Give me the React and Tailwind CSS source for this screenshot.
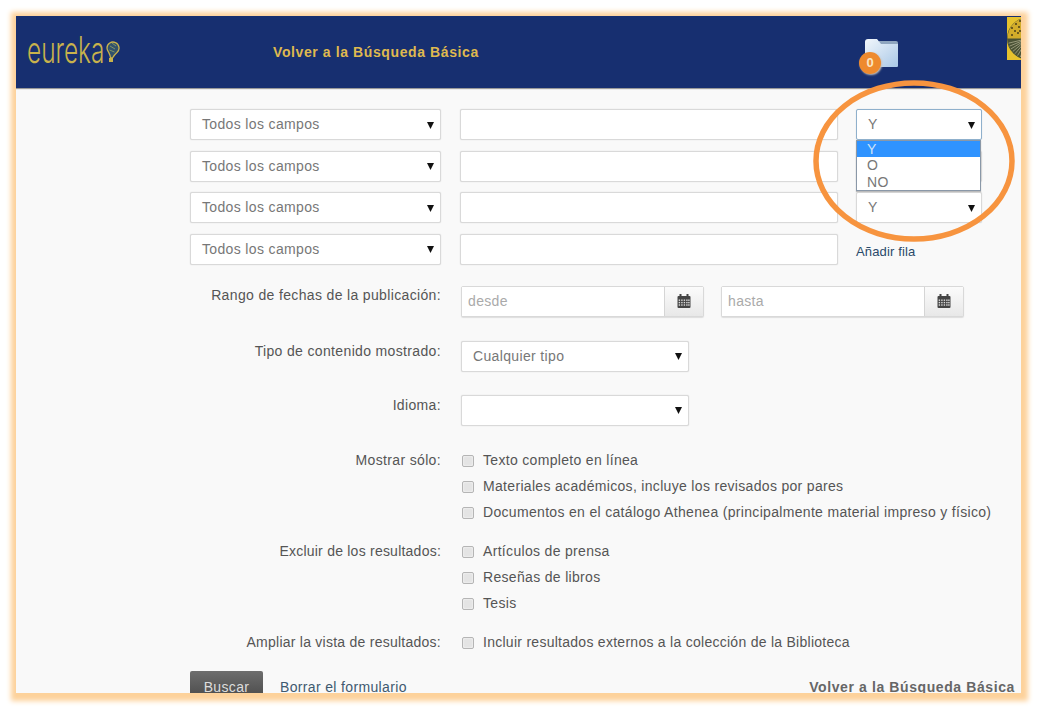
const Caret = () => (
  <svg width="7" height="8" viewBox="0 0 7 8" className="shrink-0"><path d="M0 1h7L3.5 8z" fill="#111" /></svg>
);

const Select = ({ value, className = "", focus = false }) => (
  <div className={`flex h-[31px] shrink-0 items-center justify-between rounded-[2px] border bg-white pl-[11px] pr-[6px] text-[#777] shadow-[0_0_1px_#ccc] ${focus ? "border-[#8fb0cc]" : "border-[#d9d9d9]"} ${className}`}>
    <span>{value}</span>
    <Caret />
  </div>
);

const CalendarIcon = () => (
  <svg width="14" height="14" viewBox="0 0 14 14">
    <rect x="0.5" y="2" width="13" height="12" rx="1" fill="#444" />
    <rect x="2.5" y="0" width="2" height="3.5" fill="#444" />
    <rect x="9.5" y="0" width="2" height="3.5" fill="#444" />
    <g fill="#ddd">
      {[5.5, 7.9, 10.3].map((y) =>
        [1.7, 4.2, 6.7, 9.2, 11.2].map((x) => <rect key={`${x}-${y}`} x={x} y={y} width="1.4" height="1.4" />)
      )}
    </g>
  </svg>
);

const DateField = ({ placeholder }) => (
  <div className="flex h-[31px] w-[243px] rounded-[2px] border border-[#d9d9d9] bg-white shadow-[0_1px_1px_#ddd]">
    <input placeholder={placeholder} className="min-w-0 flex-1 bg-white pl-[6px] outline-none placeholder:text-[#aaa]" />
    <div className="flex w-[39px] items-center justify-center border-l border-[#d5d5d5] bg-gradient-to-b from-[#fbfbfb] to-[#e8e8e8]">
      <CalendarIcon />
    </div>
  </div>
);

const Row = ({ label, labelClass = "", children, className = "" }) => (
  <div className={`flex ${className}`}>
    <div className={`w-[425px] shrink-0 text-right text-[#555] ${labelClass}`}>{label}</div>
    <div className="ml-[20px]">{children}</div>
  </div>
);

const Check = ({ children, className = "tracking-[0.32px]" }) => (
  <label className={`flex h-[26px] items-center pl-[1px] ${className}`}>
    <input type="checkbox" className="h-[12px] w-[12px] appearance-none rounded-[2px] border border-[#b5b5b5] bg-[#e4e4e4] shadow-[inset_0_0_2px_#fff]" />
    <span className="ml-[9px] text-[#555]">{children}</span>
  </label>
);

const SearchRow = ({ third }) => (
  <div className="flex">
    <Select value="Todos los campos" className="w-[251px]" />
    <input className="ml-[19px] h-[31px] w-[378px] rounded-[2px] border border-[#d9d9d9] bg-white shadow-[0_0_1px_#ccc] outline-none" />
    <div className="ml-[18px] flex items-center">{third}</div>
  </div>
);

export default function App() {
  return (
    <div className="h-[710px] w-[1037px] overflow-hidden bg-white pl-[16px] pt-[16px] font-['Liberation_Sans',Arial,sans-serif] text-[14px] tracking-[0.35px]">
      <div className="relative h-[677px] w-[1005px] bg-[#f9f9f9] shadow-[1px_2px_5px_6px_#fdd29b]">
        <div className="absolute inset-0 overflow-hidden">
          <header className="relative flex h-[72px] items-center bg-[#172f70] shadow-[0_1px_1px_#999]">
            <div className="ml-[11px] flex h-[40px] w-[246px] items-center">
              <div className="h-[40px] w-[78px] shrink-0">
                <span className="block origin-top-left scale-x-[0.66] font-['Inter',sans-serif] text-[37px] font-light leading-[36px] tracking-[0px] text-[#c8b24c]">eureka</span>
              </div>
              <svg width="15" height="25" viewBox="0 0 15 25" className="mt-[-2px]">
                <path d="M2 9a6 6 0 1 1 10 4.500c-1.500 1.300-3 3-4.500 5.500L5.500 19c0-2.500-1-4-2-6C2.400 11.600 2 10.500 2 9z" fill="#31516c" stroke="#c8b24c" strokeWidth="1.300" />
                <path d="M5 7l5 3M4.500 11l5 2M7 4l4 3" stroke="#7f9464" strokeWidth="1" />
                <rect x="4" y="19" width="4" height="4" fill="#c8b24c" />
              </svg>
            </div>
            <a className="text-[14px] font-bold tracking-[0.6px] text-[#dfb94f]">Volver a la Búsqueda Básica</a>
            <svg width="36" height="30" viewBox="0 0 36 30" className="absolute left-[848px] top-[22px]">
              <defs>
                <linearGradient id="fold" x1="0" y1="0" x2="1" y2="1">
                  <stop offset="0" stopColor="#f2f7fc" />
                  <stop offset="1" stopColor="#a9c8e6" />
                </linearGradient>
              </defs>
              <path d="M15 3h17q2 0 2 2v5H15z" fill="#8fa6bf" />
              <path d="M1 4q0-3 3-3h9l4 5h17v22q0 1-1 1H2q-1 0-1-1z" fill="url(#fold)" />
            </svg>
            <div className="absolute left-[843px] top-[36px] flex h-[22px] w-[22px] items-center justify-center rounded-full bg-[#ee8a2e] text-[13px] font-bold tracking-normal text-[#fbe6c4] shadow-[1px_1px_2px_#c9c2b8]">0</div>
            <svg width="14" height="43" viewBox="0 0 14 43" className="absolute right-0 top-[1px]">
              <rect width="14" height="43" fill="#e6c22e" />
              <circle cx="21" cy="21.500" r="21" fill="#4a5236" />
              <path d="M0.500 21.500a21 21 0 0 1 20.500-21V21.500z" fill="#d2ac2a" />
              <g fill="#4a3f1a">
                {[[5, 11], [9, 7], [13, 4], [8, 14], [12, 10], [5, 18], [11, 16], [13, 14]].map(([x, y]) => (
                  <circle key={`${x}-${y}`} cx={x} cy={y} r="1" />
                ))}
              </g>
              <g stroke="#a9a98a" strokeWidth="0.800">
                {[...Array(9)].map((_, i) => {
                  const a = (Math.PI * (i + 10.5)) / 20;
                  return <line key={i} x1={21 + 6 * Math.cos(a)} y1={21.5 + 6 * Math.sin(a)} x2={21 + 20 * Math.cos(a)} y2={21.5 + 20 * Math.sin(a)} />;
                })}
              </g>
            </svg>
          </header>

          <main className="pt-[21px]">
            <div className="ml-[174px] flex flex-col gap-[10.5px]">
              <SearchRow third={<Select value="Y" focus className="w-[126px]" />} />
              <SearchRow third={<Select value="Y" className="w-[126px]" />} />
              <SearchRow third={<Select value="Y" className="w-[126px]" />} />
              <SearchRow third={<a className="mt-[5px] text-[13px] tracking-[0.15px] text-[#2a4a6a]">Añadir fila</a>} />
            </div>

            <Row label="Rango de fechas de la publicación:" labelClass="mt-[-1px]" className="mt-[21px]">
              <div className="flex gap-[17px]">
                <DateField placeholder="desde" />
                <DateField placeholder="hasta" />
              </div>
            </Row>
            <Row label="Tipo de contenido mostrado:" className="mt-[24px]">
              <Select value="Cualquier tipo" className="w-[228px]" />
            </Row>
            <Row label="Idioma:" className="mt-[23px]">
              <Select value="" className="w-[228px]" />
            </Row>
            <Row label="Mostrar sólo:" labelClass="pt-[2px]" className="mt-[22px]">
              <Check>Texto completo en línea</Check>
              <Check>Materiales académicos, incluye los revisados por pares</Check>
              <Check>Documentos en el catálogo Athenea (principalmente material impreso y físico)</Check>
            </Row>
            <Row label="Excluir de los resultados:" labelClass="pt-[2px] tracking-[0.23px]" className="mt-[13px]">
              <Check>Artículos de prensa</Check>
              <Check>Reseñas de libros</Check>
              <Check>Tesis</Check>
            </Row>
            <Row label="Ampliar la vista de resultados:" labelClass="pt-[2px] tracking-[0.25px]" className="mt-[13px]">
              <Check className="tracking-[0.27px]">Incluir resultados externos a la colección de la Biblioteca</Check>
            </Row>
            <div className="mt-[15px] flex items-start">
              <button className="ml-[174px] h-[32px] w-[73px] rounded-[2px] bg-gradient-to-b from-[#6e6e6e] to-[#454545] pt-[1px] text-[#ddd]">Buscar</button>
              <a className="ml-[17px] mt-[6px] text-[#3f5a70]">Borrar el formulario</a>
              <a className="ml-auto mr-[6px] mt-[6px] text-[14px] font-bold tracking-[0.6px] text-[#666]">Volver a la Búsqueda Básica</a>
            </div>
          </main>
        </div>

        <ul className="absolute left-[840px] top-[124px] w-[125px] border border-[#8a98a8] bg-white text-[14px] leading-[16.300px] text-[#777] shadow-[0_1px_1px_#bbb]">
          <li className="bg-[#2f93ff] pl-[10px] text-[#cfe3f7]">Y</li>
          <li className="pl-[10px]">O</li>
          <li className="pl-[10px]">NO</li>
        </ul>

        <svg width="210" height="168" viewBox="0 0 210 168" className="absolute left-[793px] top-[61px]">
          <ellipse cx="105" cy="84" rx="98" ry="78" fill="none" stroke="#f7943f" strokeWidth="5.500" />
        </svg>
      </div>
    </div>
  );
}
